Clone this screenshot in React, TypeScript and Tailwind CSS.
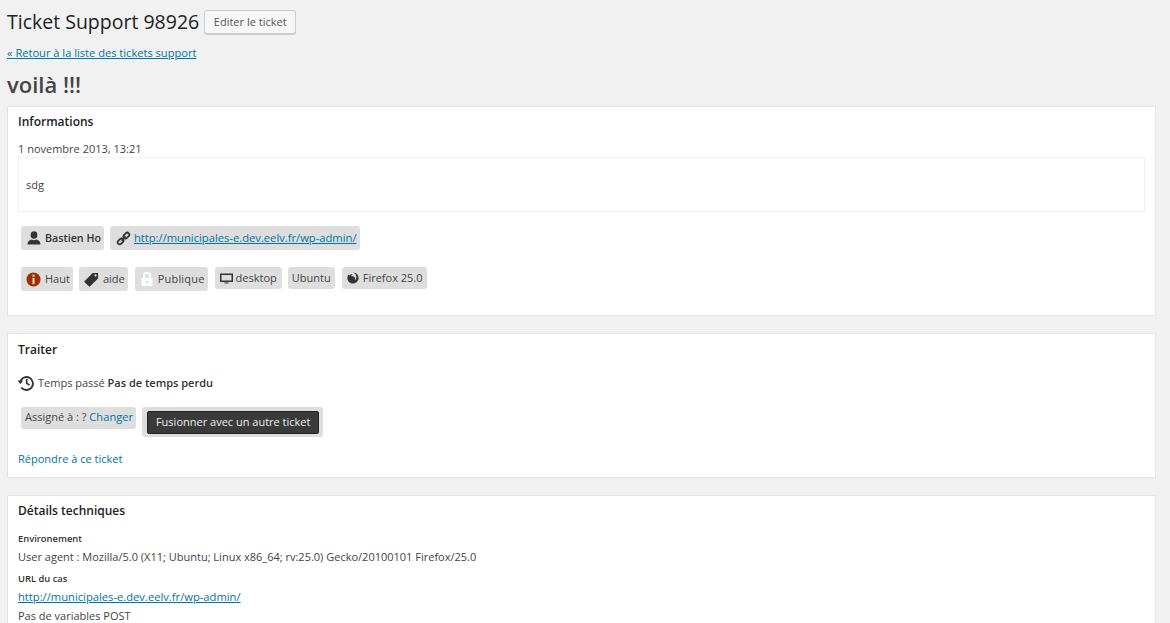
import type { ReactNode } from 'react';

const linkClass = 'text-[#0074a2]';

function UserIcon() {
  return (
    <svg viewBox="0 0 16 16" className="mr-[3px] size-[16px] text-[#333]" fill="currentColor">
      <ellipse cx="8" cy="5" rx="3.4" ry="3.8" />
      <path d="M1.5 14.5c0-3.2 2-4.2 4.3-5 1.3.9 3.1.9 4.4 0 2.300.8 4.300 1.800 4.300 5z" />
    </svg>
  );
}

function LinkIcon() {
  return (
    <svg viewBox="0 0 16 16" className="mr-[3px] size-[15px] text-[#333]" fill="none" stroke="currentColor" strokeWidth="1.9">
      <rect x="7.6" y="2.700" width="7" height="4.400" rx="2.200" transform="rotate(-45 11.100 4.900)" />
      <rect x="1.400" y="8.900" width="7" height="4.400" rx="2.200" transform="rotate(-45 4.900 11.100)" />
      <path d="M5.800 10.200l4.400-4.400" />
    </svg>
  );
}

function InfoIcon() {
  return (
    <svg viewBox="0 0 16 16" className="mr-[4px] size-[15px]">
      <circle cx="8" cy="8" r="7.500" fill="#9c3000" />
      <rect x="6.900" y="2.800" width="2.200" height="2.200" fill="#e9d9cf" />
      <rect x="6.900" y="6.200" width="2.200" height="6.800" fill="#e9d9cf" />
    </svg>
  );
}

function TagIcon() {
  return (
    <svg viewBox="0 0 16 16" className="mr-[4px] size-[15px] text-[#333]" fill="currentColor">
      <path
        fillRule="evenodd"
        d="M9.200 1H15v5.800L6.500 15.300a1 1 0 0 1-1.400 0L.7 10.900a1 1 0 0 1 0-1.400zM12.300 2.500a1.200 1.200 0 1 0 0 2.400 1.200 1.200 0 0 0 0-2.400z"
      />
    </svg>
  );
}

function LockIcon() {
  return (
    <svg viewBox="0 0 12 16" className="mr-[5px] h-[16px] w-[12px] text-white" fill="currentColor">
      <path
        fillRule="evenodd"
        d="M2 7V4.800a4 4 0 0 1 8 0V7h1.500v8H.5V7zm2 0h4V4.800a2 2 0 0 0-4 0zM5 10v2.500h2V10z"
      />
    </svg>
  );
}

function DesktopIcon() {
  return (
    <svg viewBox="0 0 13 13" className="mr-[3px] size-[13px] text-[#333]" fill="currentColor">
      <path fillRule="evenodd" d="M0 1.500h13v8.500H0zm1.500 1.500v5.500h10V3z" />
      <path d="M4.500 10.500h4v1h-4z" />
    </svg>
  );
}

function FirefoxIcon() {
  return (
    <svg viewBox="0 0 12 12" className="mr-[4px] size-[12px] text-[#333]" fill="currentColor">
      <path d="M6.200.4c3.200.1 5.500 2.600 5.400 5.700-.1 3.100-2.600 5.500-5.700 5.500C2.800 11.600.4 9.200.4 6.100.4 4.300 1.200 2.900 2.200 2c-.2.900 0 1.500.6 1.800C3.200 2.600 4.600 1.900 6 2.100 5 2.500 4.400 3.200 4.400 4c.6.500 1.900.200 3 .9 1 .700 1 2.100.200 3 1-.3 1.900-1.400 1.800-3C9.300 3 8 1.200 6.200.4z" />
    </svg>
  );
}

function HistoryIcon() {
  return (
    <svg viewBox="0 0 18 18" className="mr-[3px] -ml-[1px] size-[18px] text-[#333]" fill="none" stroke="currentColor" strokeWidth="1.900">
      <path d="M3.400 7.200A6.500 6.500 0 1 1 4.300 13.500" />
      <path d="M0.700 6.600h5.400L3.400 10.300z" fill="currentColor" stroke="none" />
      <path d="M9.700 5v4.300l2.900 1.800" strokeWidth="1.700" />
    </svg>
  );
}

function Badge({ children, className = '' }: { children: ReactNode; className?: string }) {
  return (
    <span className={`flex items-center rounded-[3px] bg-[#dedede] ${className}`}>
      {children}
    </span>
  );
}

function Card({ title, children, className = '', titleClass = 'pt-[6px]' }: { title: string; children: ReactNode; className?: string; titleClass?: string }) {
  return (
    <section className={`border border-[#e5e5e5] bg-white px-[10px] ${className}`}>
      <h3 className={`text-[12px] leading-[17px] font-semibold text-[#222] ${titleClass}`}>{title}</h3>
      {children}
    </section>
  );
}

export default function App() {
  return (
    <div className="h-[623px] overflow-hidden bg-[#f1f1f1] pl-[7px] pr-[14px] font-['Open_Sans',sans-serif] text-[11px] text-[#444]">
      <div className="flex h-[44px] items-center">
        <h2 className="-mt-[2px] text-[19.500px] leading-[29px] text-[#222]">Ticket Support 98926</h2>
        <button className="ml-[5px] flex h-[24px] w-[92px] items-center justify-center rounded-[3px] border border-[#ccc] bg-[#f7f7f7] text-[11px] text-[#555] shadow-[0_1px_0_#ccc]">
          Editer le ticket
        </button>
      </div>
      <a className={`mt-[1px] block text-[11.100px] leading-[16px] underline ${linkClass}`}>« Retour à la liste des tickets support</a>
      <h1 className="mt-[8px] text-[22px] leading-[30px] font-semibold text-[#444]">voilà !!!</h1>

      <Card title="Informations" className="mt-[7px] h-[210px]">
        <p className="mt-[11px] leading-[16px]">1 novembre 2013, 13:21</p>
        <div className="h-[55px] border border-[#f1f1f1] pl-[7px] pt-[19px] leading-[16px]">sdg</div>
        <div className="mt-[14px] ml-[3px] flex gap-[6px]">
          <Badge className="h-[24px] pl-[5px] pr-[3px] text-[10.700px] font-semibold text-[#333]">
            <UserIcon />
            Bastien Ho
          </Badge>
          <Badge className="h-[24px] pl-[6px] pr-[3px]">
            <LinkIcon />
            <a className={`text-[11.200px] underline ${linkClass}`}>http://municipales-e.dev.eelv.fr/wp-admin/</a>
          </Badge>
        </div>
        <div className="mt-[17px] ml-[3px] flex items-start gap-[6px]">
          <Badge className="h-[24px] pl-[5px] pr-[3px]">
            <InfoIcon />
            Haut
          </Badge>
          <Badge className="h-[24px] pl-[5px] pr-[3px]">
            <TagIcon />
            aide
          </Badge>
          <Badge className="ml-[1px] h-[24px] pl-[6px] pr-[3px] tracking-[0.2px]">
            <LockIcon />
            Publique
          </Badge>
          <Badge className="ml-[1px] h-[22px] pl-[5px] pr-[5px]">
            <DesktopIcon />
            desktop
          </Badge>
          <Badge className="h-[22px] px-[4px]">Ubuntu</Badge>
          <Badge className="ml-[1px] h-[22px] pl-[5px] pr-[4px]">
            <FirefoxIcon />
            Firefox 25.0
          </Badge>
        </div>
      </Card>

      <Card title="Traiter" titleClass="pt-[7px]" className="mt-[17px] h-[145px]">
        <div className="mt-[16px] flex h-[18px] items-center">
          <HistoryIcon />
          Temps passé&nbsp;<strong className="font-semibold text-[#333]">Pas de temps perdu</strong>
        </div>
        <div className="mt-[15px] ml-[3px] flex items-start gap-[6px]">
          <Badge className="h-[22px] pb-[1px] pl-[4px] pr-[3px]">
            Assigné à : ?&nbsp;<a className={`tracking-[0.1px] ${linkClass}`}>Changer</a>
          </Badge>
          <Badge className="h-[30px] pl-[5px] pr-[4px]">
            <button className="flex h-[23px] w-[172px] items-center justify-center rounded-[2px] border border-[#222] bg-[#3a3a3a] text-[#eee]">
              Fusionner avec un autre ticket
            </button>
          </Badge>
        </div>
        <a className={`mt-[14px] block leading-[16px] ${linkClass}`}>Répondre à ce ticket</a>
      </Card>

      <Card title="Détails techniques" className="mt-[17px] h-[200px]">
        <h4 className="mt-[13px] text-[9.400px] leading-[14px] font-semibold text-[#333]">Environement</h4>
        <p className="mt-[3px] leading-[16px]">User agent : Mozilla/5.0 (X11; Ubuntu; Linux x86_64; rv:25.0) Gecko/20100101 Firefox/25.0</p>
        <h4 className="mt-[7px] text-[9.400px] leading-[14px] font-semibold text-[#333]">URL du cas</h4>
        <a className={`mt-[3px] block text-[11.200px] leading-[16px] underline ${linkClass}`}>http://municipales-e.dev.eelv.fr/wp-admin/</a>
        <p className="mt-[4px] leading-[14px]">Pas de variables POST</p>
      </Card>
    </div>
  );
}
